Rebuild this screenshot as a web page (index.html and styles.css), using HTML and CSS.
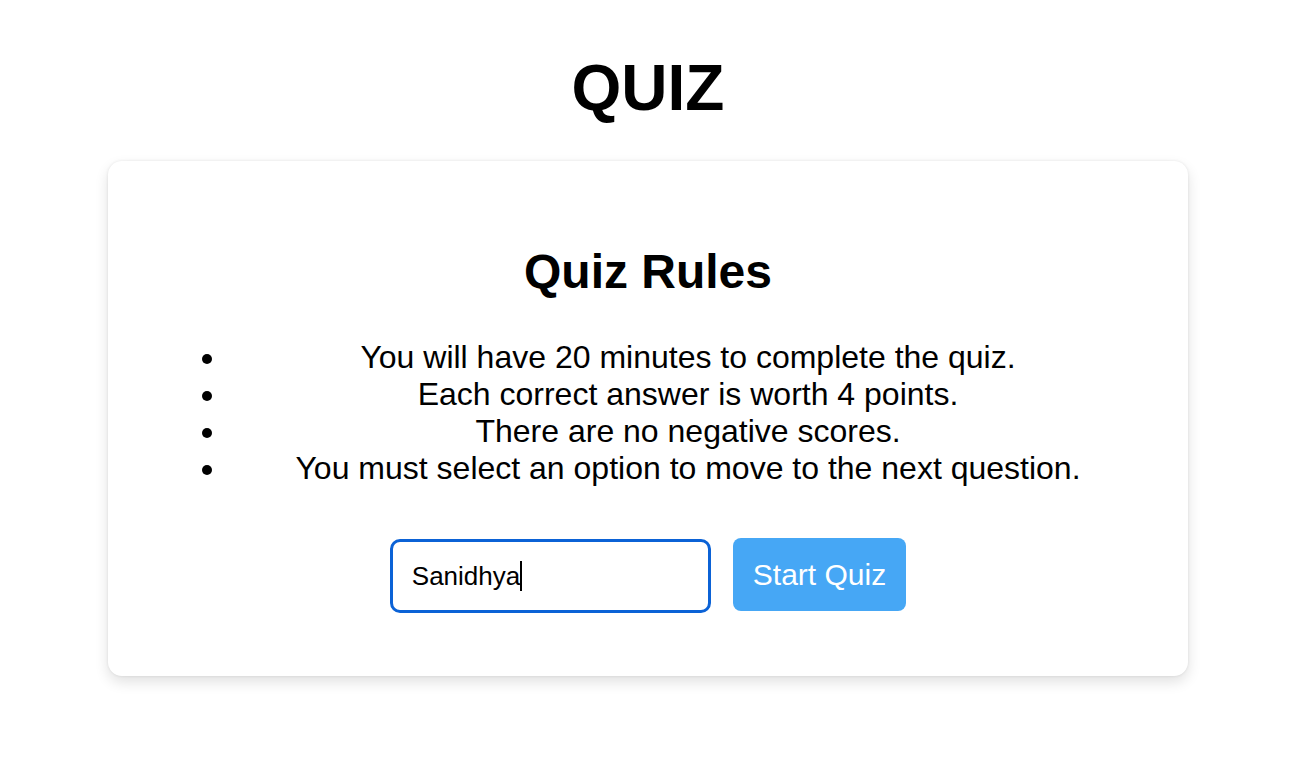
FILE: index.html
```html
<!DOCTYPE html>
<html lang="en">
<head>
<meta charset="utf-8">
<title>Quiz</title>
<link rel="stylesheet" href="styles.css">
</head>
<body>
  <main class="page">
    <h1 class="title">QUIZ</h1>
    <section class="card">
      <h2 class="card-title">Quiz Rules</h2>
      <ul class="rules">
        <li>You will have 20 minutes to complete the quiz.</li>
        <li>Each correct answer is worth 4 points.</li>
        <li>There are no negative scores.</li>
        <li>You must select an option to move to the next question.</li>
      </ul>
      <div class="start-row">
        <div class="name-input"><span class="name-text">Sanidhya</span><span class="caret"></span></div>
        <button class="start-btn" type="button">Start Quiz</button>
      </div>
    </section>
  </main>
</body>
</html>
```
FILE: styles.css
```css
html, body {
  margin: 0;
  padding: 0;
  background: #ffffff;
}

body {
  font-family: "Liberation Sans", Arial, Helvetica, sans-serif;
  color: #000;
}

.page {
  width: 1296px;
  display: flex;
  flex-direction: column;
  align-items: center;
  padding: 52px 0 60px;
}

.title {
  margin: 0 0 36px;
  font-size: 64px;
  line-height: 73px;
  font-weight: 700;
  text-align: center;
}

.card {
  width: 1080px;
  box-sizing: border-box;
  padding: 0 40px 63px;
  background: #fff;
  border-radius: 14px;
  box-shadow: 0 6px 14px rgba(0, 0, 0, 0.12), 0 0 3px rgba(0, 0, 0, 0.09);
  display: flex;
  flex-direction: column;
  align-items: stretch;
}

.card-title {
  margin: 83px 0 40px;
  font-size: 48px;
  line-height: 55px;
  font-weight: 700;
  text-align: center;
}

.rules {
  margin: 0 0 51px;
  padding-left: 80px;
  font-size: 32px;
  line-height: 37px;
  text-align: center;
}

.start-row {
  display: flex;
  justify-content: center;
  align-items: flex-start;
  gap: 22px;
}

.name-input {
  width: 321px;
  height: 74px;
  box-sizing: border-box;
  border: 3px solid #0b62d6;
  border-radius: 10px;
  padding: 0 19px;
  display: flex;
  align-items: center;
  font-size: 26px;
  color: #000;
  margin-top: 1px;
}

.caret {
  display: inline-block;
  width: 2px;
  height: 30px;
  background: #000;
}

.start-btn {
  height: 73px;
  box-sizing: border-box;
  padding: 0 20px;
  border: none;
  border-radius: 8px;
  background: #46a7f5;
  color: #fff;
  font-family: "Liberation Sans", Arial, Helvetica, sans-serif;
  font-size: 30px;
}
```
